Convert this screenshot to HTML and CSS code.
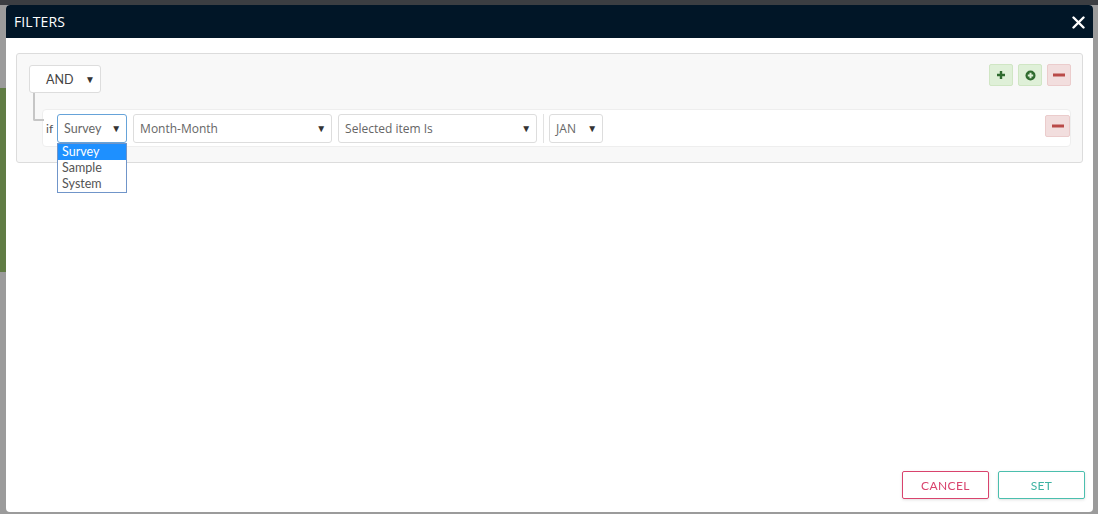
FILE: index.html
```html
<!DOCTYPE html>
<html lang="en">
<head>
  <meta charset="UTF-8" />
  <title>Filters</title>
  <link rel="stylesheet" href="styles.css">
</head>
<body>
  <div class="page-top"></div>
  <div class="page-side">
    <div class="side-green"></div>
  </div>

  <div class="modal">
    <div class="modal-header">
      <span class="modal-title">FILTERS</span>
      <button class="close-btn" aria-label="Close">
        <svg width="13" height="13" viewBox="0 0 13 13"><path d="M1.5 1.5 L11.5 11.5 M11.5 1.5 L1.5 11.5" stroke="#fff" stroke-width="2.4" stroke-linecap="round"/></svg>
      </button>
    </div>

    <div class="modal-body">
      <div class="group">
        <div class="group-top">
          <div class="fake-select and-select">
            <span>AND</span><span class="caret">&#9660;</span>
          </div>
          <div class="group-actions">
            <button class="btn-mini btn-ok" title="Add rule">
              <svg width="10" height="10" viewBox="0 0 10 10"><path d="M5 1 V9 M1 5 H9" stroke="#2f6b2f" stroke-width="2.4"/></svg>
            </button>
            <button class="btn-mini btn-ok" title="Add group">
              <svg width="11" height="11" viewBox="0 0 11 11"><circle cx="5.5" cy="5.5" r="5" fill="#2f6b2f"/><path d="M5.5 2.8 V8.2 M2.8 5.5 H8.2" stroke="#dff0d8" stroke-width="2"/></svg>
            </button>
            <button class="btn-mini btn-bad" title="Delete group">
              <svg width="12" height="4" viewBox="0 0 12 4"><rect x="0" y="0.5" width="12" height="3" fill="#b94a48"/></svg>
            </button>
          </div>
        </div>

        <div class="rule">
          <span class="rule-if">if</span>
          <div class="select-wrap">
            <div class="fake-select src-select focused">
              <span>Survey</span><span class="caret">&#9660;</span>
            </div>
            <ul class="dropdown">
              <li class="active">Survey</li>
              <li>Sample</li>
              <li>System</li>
            </ul>
          </div>
          <div class="fake-select os wide">
            <span>Month-Month</span><span class="caret">&#9660;</span>
          </div>
          <div class="fake-select os wide">
            <span>Selected item Is</span><span class="caret">&#9660;</span>
          </div>
          <div class="rule-sep"></div>
          <div class="fake-select os jan-select">
            <span>JAN</span><span class="caret">&#9660;</span>
          </div>
          <button class="btn-mini btn-bad rule-del" title="Delete rule">
            <svg width="12" height="4" viewBox="0 0 12 4"><rect x="0" y="0.5" width="12" height="3" fill="#b94a48"/></svg>
          </button>
        </div>
      </div>
    </div>

    <div class="modal-footer">
      <button class="btn-outline btn-cancel">CANCEL</button>
      <button class="btn-outline btn-set">SET</button>
    </div>
  </div>
</body>
</html>
```

FILE: styles.css
```css
* {
    margin: 0;
    padding: 0;
    box-sizing: border-box;
}
body {
    background: #9b9b9b;
    font-family: 'Lato', sans-serif;
    height: 514px;
    overflow: hidden;
}
.page-top {
    height: 5px;
    background: #3b3e42;
}
.page-side {
    width: 6px;
    padding-top: 83px;
}
.side-green {
    height: 184px;
    background: #607c44;
}

.modal {
    position: fixed;
    top: 5px;
    left: 6px;
    width: 1087px;
    height: 507px;
    background: #fff;
    border-radius: 4px;
    display: flex;
    flex-direction: column;
    overflow: hidden;
}
.modal-header {
    height: 33px;
    background: #011627;
    display: flex;
    align-items: center;
    justify-content: space-between;
    padding: 0 8px 0 8px;
}
.modal-title {
    font-family: 'Open Sans', sans-serif;
    font-size: 14px;
    color: #fff;
    letter-spacing: 0.1px;
}
.close-btn {
    background: none;
    border: none;
    width: 14px;
    height: 14px;
    display: flex;
    align-items: center;
    justify-content: center;
    margin-top: 2px;
}

.modal-body {
    flex: 1;
    padding: 15px 10px 0 10px;
}
.group {
    background: #f8f8f8;
    border: 1px solid #dcdcdc;
    border-radius: 3px;
    padding: 11px 11px 15px 12px;
}
.group-top {
    display: flex;
    justify-content: space-between;
    align-items: flex-start;
}
.group-actions {
    display: flex;
    gap: 5px;
    margin-top: -1px;
}
.btn-mini {
    width: 24px;
    height: 22px;
    border-radius: 2px;
    display: flex;
    align-items: center;
    justify-content: center;
}
.btn-ok {
    background: #dff0d8;
    border: 1px solid #d0e6c4;
}
.btn-bad {
    background: #f2dede;
    border: 1px solid #ebcccc;
}

.fake-select {
    height: 29px;
    background: #fff;
    border: 1px solid #ddd;
    border-radius: 3px;
    display: flex;
    align-items: center;
    justify-content: space-between;
    font-size: 12.5px;
    color: #666;
    padding: 0 5px 0 6px;
}
.caret {
    font-size: 10px;
    color: #333;
}
.and-select {
    width: 72px;
    height: 28px;
    padding-left: 16px;
    color: #444;
    font-size: 12.5px;
}
.src-select {
    width: 70px;
}
.src-select.focused {
    border-color: #66a3d9;
}
.os {
    font-family: 'Open Sans', sans-serif;
    font-size: 12px;
    color: #666;
}
.wide {
    width: 199px;
}
.jan-select {
    width: 54px;
}

.rule {
    position: relative;
    margin: 16px 0 0 13px;
    height: 38px;
    background: #fff;
    border: 1px solid #eee;
    border-radius: 4px;
    display: flex;
    align-items: center;
    gap: 6px;
    padding: 0 0 0 3px;
}
.rule::before {
    content: "";
    position: absolute;
    left: -10px;
    top: -17px;
    width: 9px;
    height: 26px;
    border-left: 2px solid #c6c6c6;
    border-bottom: 2px solid #c6c6c6;
    border-bottom-left-radius: 2px;
}
.rule-if {
    font-size: 12px;
    color: #555;
    margin-right: -2px;
}
.select-wrap {
    position: relative;
}
.dropdown {
    position: absolute;
    top: 29px;
    left: 0;
    width: 70px;
    list-style: none;
    background: #fff;
    border: 1px solid #7095c9;
    z-index: 5;
    font-size: 12.5px;
    color: #555;
}
.dropdown li {
    height: 16px;
    line-height: 16px;
    padding-left: 4px;
}
.dropdown li.active {
    background: #1e90ff;
    color: #fff;
}
.rule-sep {
    width: 1px;
    height: 29px;
    background: #e2e2e2;
    margin-right: -1px;
}
.rule-del {
    margin-left: auto;
    margin-top: -5px;
    width: 25px;
}

.modal-footer {
    display: flex;
    justify-content: flex-end;
    gap: 9px;
    padding: 0 8px 13px 0;
}
.btn-outline {
    width: 87px;
    height: 28px;
    background: #fff;
    border-radius: 2px;
    font-family: 'Lato', sans-serif;
    font-size: 12px;
    letter-spacing: 0.4px;
    box-shadow: 0 1px 3px rgba(0,0,0,0.12);
}
.btn-cancel {
    border: 1px solid #d9436d;
    color: #d9436d;
}
.btn-set {
    border: 1px solid #4bbfae;
    color: #3fb3a3;
}
```
